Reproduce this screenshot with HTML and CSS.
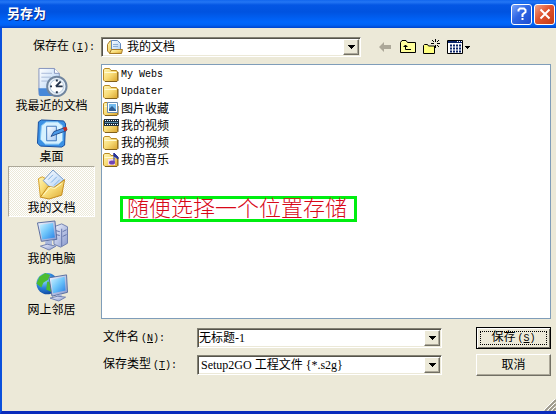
FILE: index.html
```html
<!DOCTYPE html>
<html lang="zh-CN">
<head>
<meta charset="utf-8">
<title>另存为</title>
<link rel="stylesheet" href="styles.css">
</head>
<body>
<svg class="defs" aria-hidden="true">
  <defs>
    <linearGradient id="gold" x1="0" y1="0" x2="1" y2="1"><stop offset="0" stop-color="#fff7b8"/><stop offset=".5" stop-color="#f8dc78"/><stop offset="1" stop-color="#d9a42c"/></linearGradient>
    <linearGradient id="screen" x1="0" y1="0" x2="1" y2="1"><stop offset="0" stop-color="#d0f2ff"/><stop offset=".5" stop-color="#6cc4fa"/><stop offset="1" stop-color="#2a80e4"/></linearGradient>
    <linearGradient id="case" x1="0" y1="0" x2="1" y2="1"><stop offset="0" stop-color="#f4f6ff"/><stop offset="1" stop-color="#8496cc"/></linearGradient>
    <linearGradient id="paper" x1="0" y1="0" x2="1" y2="1"><stop offset="0" stop-color="#ffffff"/><stop offset="1" stop-color="#a8ccf4"/></linearGradient>
    <radialGradient id="globe" cx=".35" cy=".3" r=".8"><stop offset="0" stop-color="#a4e8ff"/><stop offset=".5" stop-color="#2c84dc"/><stop offset="1" stop-color="#083c94"/></radialGradient>
    <symbol id="folder" viewBox="0 0 16 16">
      <path d="M.5 13V2.500L2 1.500h4.500L8 3.500h5.500L14.500 5v8.500l-1 1H2z" fill="url(#gold)" stroke="#b98a24"/>
      <path d="M1.500 5.500h12" stroke="#fffbd4"/><path d="M2 14.500h12l1-1V5" fill="none" stroke="#81601c"/>
    </symbol>
    <symbol id="arrow" viewBox="0 0 7 4"><path d="M0 0h7v1H6v1H5v1H4v1H3V3H2V2H1V1H0z" fill="#000"/></symbol>
  </defs>
</svg>
<main class="dialog">
  <header class="titlebar">
    <h1>另存为</h1>
    <button class="caption help" aria-label="帮助"><svg width="18" height="18" viewBox="0 0 18 18"><path d="M5.500 6.500V5L7 3.500h4L12.500 5v2L9.500 9.500V12" fill="none" stroke="#fff" stroke-width="2"/><path d="M8.500 13h2v2h-2z" fill="#fff"/></svg></button>
    <button class="caption close" aria-label="关闭"><svg width="18" height="18" viewBox="0 0 18 18"><path d="M4.500 4.500l9 9M13.500 4.500l-9 9" stroke="#fff" stroke-width="2"/></svg></button>
  </header>

  <div class="lookin">
    <label for="place">保存在<span class="latin">(<u>I</u>):</span></label>
    <div class="combo has-icon">
      <svg class="combo-icon" width="16" height="16" viewBox="0 0 16 16"><path d="M.5 5.500L3 2h3v11l-3 1.500L.5 12z" fill="url(#gold)" stroke="#a87c28"/><path d="M4.500 1.500h6l3 3v8h-9z" fill="url(#paper)" stroke="#6489bd"/><path d="M6 5.500h5M6 7.500h5" stroke="#8eafd6"/><path d="M2.500 14.500l2-4h11l-1 4z" fill="url(#gold)" stroke="#a87c28"/></svg>
      <select id="place"><option>我的文档</option></select>
      <span class="drop"><svg width="7" height="4"><use href="#arrow"/></svg></span>
    </div>
    <div class="tools">
      <button aria-label="后退"><svg width="16" height="16" viewBox="0 0 16 16"><path d="M2 8l5-5v3h7v4H7v3z" fill="#aca899"/></svg></button>
      <button aria-label="向上一级"><svg width="16" height="16" viewBox="0 0 16 16"><path d="M.5 13.500v-10L2 1.500h4l1.500 2h8v10z" fill="#ffff9c" stroke="#000"/><path d="M5.500 6v4.500H11M3.500 7.500h4M4.500 6.500h2" fill="none" stroke="#000"/></svg></button>
      <button aria-label="新建文件夹"><svg width="17" height="16" viewBox="0 0 17 16"><path d="M.5 14.500v-8l1-1h3l1 1.500h6v7.500z" fill="#ffff80" stroke="#000"/><path d="M12.500 0v3M12.500 6v3M8 4.500h3M14 4.500h3M9 1l2 2M16 1l-2 2M14 6l2 2" stroke="#000"/></svg></button>
      <button class="view" aria-label="查看菜单"><svg width="23" height="16" viewBox="0 0 23 16"><path d="M.5 1.500h15v13H.5z" fill="#fff" stroke="#000"/><path d="M1 2h14v2H1z" fill="#0a246a"/><path d="M10 2h1v1h-1zm2 0h1v1h-1zm2 0h1v1h-1z" fill="#fff"/><path d="M3 6.500h11M3 9.500h11M3 12.500h11" stroke="#0a246a" stroke-width="2" stroke-dasharray="2 1"/><path d="M18 7h5v1h-1v1h-1v1h-1V9h-1V8h-1z"/></svg></button>
    </div>
  </div>

  <div class="browser">
    <nav class="places">
      <button><svg width="32" height="32" viewBox="0 0 32 32"><path d="M2.500 1.500h16l5 5v22h-21z" fill="url(#paper)" stroke="#8494bd"/><path d="M18.500 1.500v5h5" fill="#fff" stroke="#8494bd"/><path d="M5 6.500h11M5 10.500h10M5 14.500h8" stroke="#a9bbd9"/><path d="M2 22h12l8 8H3z" fill="#4888d8"/><circle cx="21" cy="20" r="10" fill="#e8f0f8" stroke="#71869f" stroke-width="2"/><circle cx="21" cy="20" r="7" fill="#fff" stroke="#b5c9dd"/><path d="M20 20h7M20 20l5-5M21 13v2M21 25v2M14 20h2" stroke="#26364d" stroke-width="2"/></svg><span>我最近的文档</span></button>
      <button><svg width="32" height="32" viewBox="0 0 32 32"><path d="M2 4l3-2 23 1 2 3-1 22-3 2L4 29l-3-3z" fill="#3b91e5" stroke="#164c9d"/><path d="M5 8l5-4h12l5 4v15l-4 4H9l-5-5z" fill="#d6f1ff" stroke="#7fc3f3"/><path d="M10.500 8.500h10v15h-10z" fill="url(#paper)" stroke="#4179bd"/><path d="M15 19l3-5 11-4 2 3-11 4z" fill="#4b9ae8" stroke="#224d8d"/><path d="M27 10l4-1 1 3-3 2z" fill="#bd2d29"/></svg><span>桌面</span></button>
      <button class="current" aria-current="true"><svg width="32" height="32" viewBox="0 0 32 32"><path d="M2 10l4-2 7 4v16l-9 1z" fill="url(#gold)" stroke="#d59e25"/><path d="M7 12L17 1l11 10-10 12z" fill="url(#paper)" stroke="#7196c5"/><path d="M12 11l5-5M15 14l6-6M18 17l6-6" stroke="#7eb1e4"/><path d="M4 29l8-11 6 1 11-8-3 16-13 4z" fill="url(#gold)" stroke="#c38a1b"/><path d="M7 27l7-8 5 1 7-5" fill="none" stroke="#fffbc9"/></svg><span>我的文档</span></button>
      <button><svg width="34" height="32" viewBox="0 0 34 32"><path d="M19 7l8-3 6 3v17l-7 4-7-3z" fill="url(#case)" stroke="#7180ae"/><path d="M27 9v18M21 11l4 1M21 15l4 1M28 12l4-2M28 17l4-2" stroke="#6274a9"/><path d="M2 3l18-2 2 19-16 2z" fill="url(#case)" stroke="#596c9e"/><path d="M4 5l14-2 2 15-13 2z" fill="url(#screen)"/><path d="M10 22l7-1v6h-7z" fill="#a6b6dd"/><path d="M5 27l7-2 9 2-7 4z" fill="url(#case)" stroke="#7180ae"/></svg><span>我的电脑</span></button>
      <button><svg width="34" height="32" viewBox="0 0 34 32"><circle cx="12" cy="13" r="11" fill="url(#globe)"/><path d="M4 6l6-4 5 2-2 5-5 3-2 5-5-4zM12 11l8 0-3 11-6-3z" fill="#4cbc31"/><path d="M14 7l18-3 1 18-16 4z" fill="url(#case)" stroke="#596c9e"/><path d="M16 9l14-3 1 14-13 3z" fill="url(#screen)"/><path d="M21 25l6-1v4h-6z" fill="#a6b6dd"/><path d="M15 28l8-2 8 1-7 4z" fill="url(#case)" stroke="#7180ae"/></svg><span>网上邻居</span></button>
    </nav>
    <section class="files">
      <ul>
        <li><svg width="16" height="16"><use href="#folder"/></svg><span class="latin">My Webs</span></li>
        <li><svg width="16" height="16"><use href="#folder"/></svg><span class="latin">Updater</span></li>
        <li><svg width="16" height="16" viewBox="0 0 16 16"><use href="#folder"/><path d="M4.500 1.500h10v10h-10z" fill="#fff" stroke="#6c8daf"/><path d="M6 3h7v7H6z" fill="#74bcef"/><path d="M6 10V8l3-3 4 4v1z" fill="#315e92"/></svg>图片收藏</li>
        <li><svg width="16" height="16" viewBox="0 0 16 16"><use href="#folder"/><path d="M1 1h15v7H1z" fill="#1d3042"/><path d="M2 2.500h13M2 6.500h13" stroke="#fff" stroke-dasharray="1 1"/><path d="M2 4h13v1H2z" fill="#588eab"/></svg>我的视频</li>
        <li><svg width="16" height="16"><use href="#folder"/></svg>我的视频</li>
        <li><svg width="16" height="16" viewBox="0 0 16 16"><use href="#folder"/><path d="M5 7h7v6H5z" fill="#f9d6eb"/><path d="M11 1v9M11 1l4 4v2l-4-3z" stroke="#28379a" fill="#28379a"/><ellipse cx="9" cy="10.500" rx="3" ry="2" fill="#7045b2"/></svg>我的音乐</li>
      </ul>
      <p class="note">随便选择一个位置存储</p>
    </section>
  </div>

  <form class="save">
    <label for="name">文件名<span class="latin">(<u>N</u>):</span></label>
    <div class="combo"><input id="name" type="text" value="无标题-1"><button type="button" class="drop" aria-label="文件名列表"><svg width="7" height="4"><use href="#arrow"/></svg></button></div>
    <button type="button" class="push default">保存<span class="latin">(<u>S</u>)</span></button>
    <label for="type">保存类型<span class="latin">(<u>T</u>):</span></label>
    <div class="combo"><select id="type"><option>Setup2GO 工程文件 {*.s2g}</option></select><span class="drop"><svg width="7" height="4"><use href="#arrow"/></svg></span></div>
    <button type="button" class="push">取消</button>
  </form>
  <svg class="grip" width="12" height="12" viewBox="0 0 12 12"><path d="M1 12L12 1M5 12l7-7M9 12l3-3" stroke="#9d9a8c" stroke-width="2"/><path d="M0 11L11 0M4 11l7-7M8 11l3-3" stroke="#fff"/></svg>
</main>
</body>
</html>
```
FILE: styles.css
```css
* { box-sizing: border-box; }
body { margin: 0; }
body, button, input, select {
  font-family: "Liberation Serif", "Noto Sans CJK SC", serif;
  font-size: 12px;
  line-height: 16px;
  color: #000;
}
button { padding: 0; border: 0; background: none; }
.defs { position: absolute; width: 0; height: 0; }
.latin { font-family: "Liberation Mono", monospace; font-size: 10px; white-space: pre; }
label .latin, .push .latin { margin-left: 2px; }

.dialog {
  position: relative;
  display: flex;
  flex-direction: column;
  min-height: 100vh;
  background: #ece9d8;
  border-left: 2px solid #0b50dc;
  border-bottom: 3px solid #0a2cbc;
}

/* Title bar */
.titlebar {
  display: flex;
  align-items: center;
  gap: 2px;
  height: 28px;
  margin-left: -2px;
  padding: 0 1px 0 7px;
  background: linear-gradient(#1266ee 0, #2476f4 2px, #0456e4 5px, #0053e0 12px, #0066fc 22px, #0062f4 25px, #0044cc 28px);
}
.titlebar h1 {
  flex: 1;
  margin: 0;
  font-size: 13px;
  line-height: 20px;
  color: #fff;
  text-shadow: 1px 1px #0a2c8c;
}
.caption {
  display: grid;
  place-items: center;
  width: 21px;
  height: 21px;
  border: 1px solid #fff;
  border-radius: 3px;
}
.help { background: linear-gradient(135deg, #7aa4fa, #2f66e4 45%, #1c4cd0); }
.close { background: linear-gradient(135deg, #f2a389, #e0532f 45%, #c23a16); }

/* Sunken combo boxes */
.combo {
  position: relative;
  display: flex;
  min-width: 0;
  height: 20px;
  background: #fff;
  border: 1px solid;
  border-color: #848274 #fff #fff #848274;
  box-shadow: inset 1px 1px #55534a, inset -1px -1px #ece9d8;
}
.combo input, .combo select {
  flex: 1;
  min-width: 0;
  width: 100%;
  padding: 0 20px 0 1px;
  border: 0;
  outline: 0;
  background: none;
  appearance: none;
}
.combo select { padding-left: 3px; }
.combo.has-icon select { padding-left: 25px; }
.combo-icon { position: absolute; left: 5px; top: 1px; }
.drop {
  position: absolute;
  top: 1px;
  right: 1px;
  bottom: 1px;
  display: grid;
  place-items: center;
  width: 16px;
  background: #ece9d8;
  border: 1px solid;
  border-color: #fff #716f64 #716f64 #fff;
  box-shadow: inset -1px -1px #aca899;
  pointer-events: none;
}

/* Location row */
.lookin {
  display: grid;
  grid-template-columns: 68px 1fr 172px;
  align-items: center;
  padding: 9px 5px 7px 31px;
}
.lookin .combo { margin-right: 18px; }
.tools { display: flex; align-items: center; gap: 7px; margin-left: -2px; }
.tools button { display: flex; }

/* Places bar and file list */
.browser {
  display: grid;
  grid-template-columns: 87px 1fr;
  gap: 6px;
  padding: 0 5px 0 6px;
}
.places button {
  display: flex;
  flex-direction: column;
  align-items: center;
  width: 100%;
  height: 51px;
  padding-top: 2px;
  border: 1px solid transparent;
}
.places .current {
  border-color: #aca899 #fff #fff #aca899;
  background: repeating-conic-gradient(#fff 0 25%, #ece9d8 0 50%) 0 0 / 2px 2px;
}
.files { position: relative; background: #fff; border: 1px solid #7f9db9; }
.files ul { margin: 0; padding: 1px; list-style: none; }
.files li { display: flex; align-items: center; gap: 2px; height: 17px; }
.note {
  position: absolute;
  left: 18px;
  top: 131px;
  margin: 0;
  padding: 0 7px 0 4px;
  border: 3px solid #00ee10;
  font-size: 22px;
  font-weight: 300;
  line-height: 20px;
  color: #d80818;
  white-space: nowrap;
}

/* File name, type and actions */
.save {
  display: grid;
  grid-template-columns: 94px 1fr 75px;
  grid-template-rows: 22px 22px;
  row-gap: 5px;
  align-items: center;
  margin: 0;
  padding: 8px 5px 0 101px;
}
.save .combo { margin-right: 34px; }
.push {
  height: 22px;
  background: #ece9d8;
  border: 1px solid;
  border-color: #fff #716f64 #716f64 #fff;
  box-shadow: inset -1px -1px #aca899;
}
.push.default {
  border-color: #000;
  box-shadow: inset 1px 1px #fff, inset -1px -1px #716f64;
  outline: 1px dotted #000;
  outline-offset: -5px;
}
.grip { position: absolute; right: 0; bottom: 0; }
```
